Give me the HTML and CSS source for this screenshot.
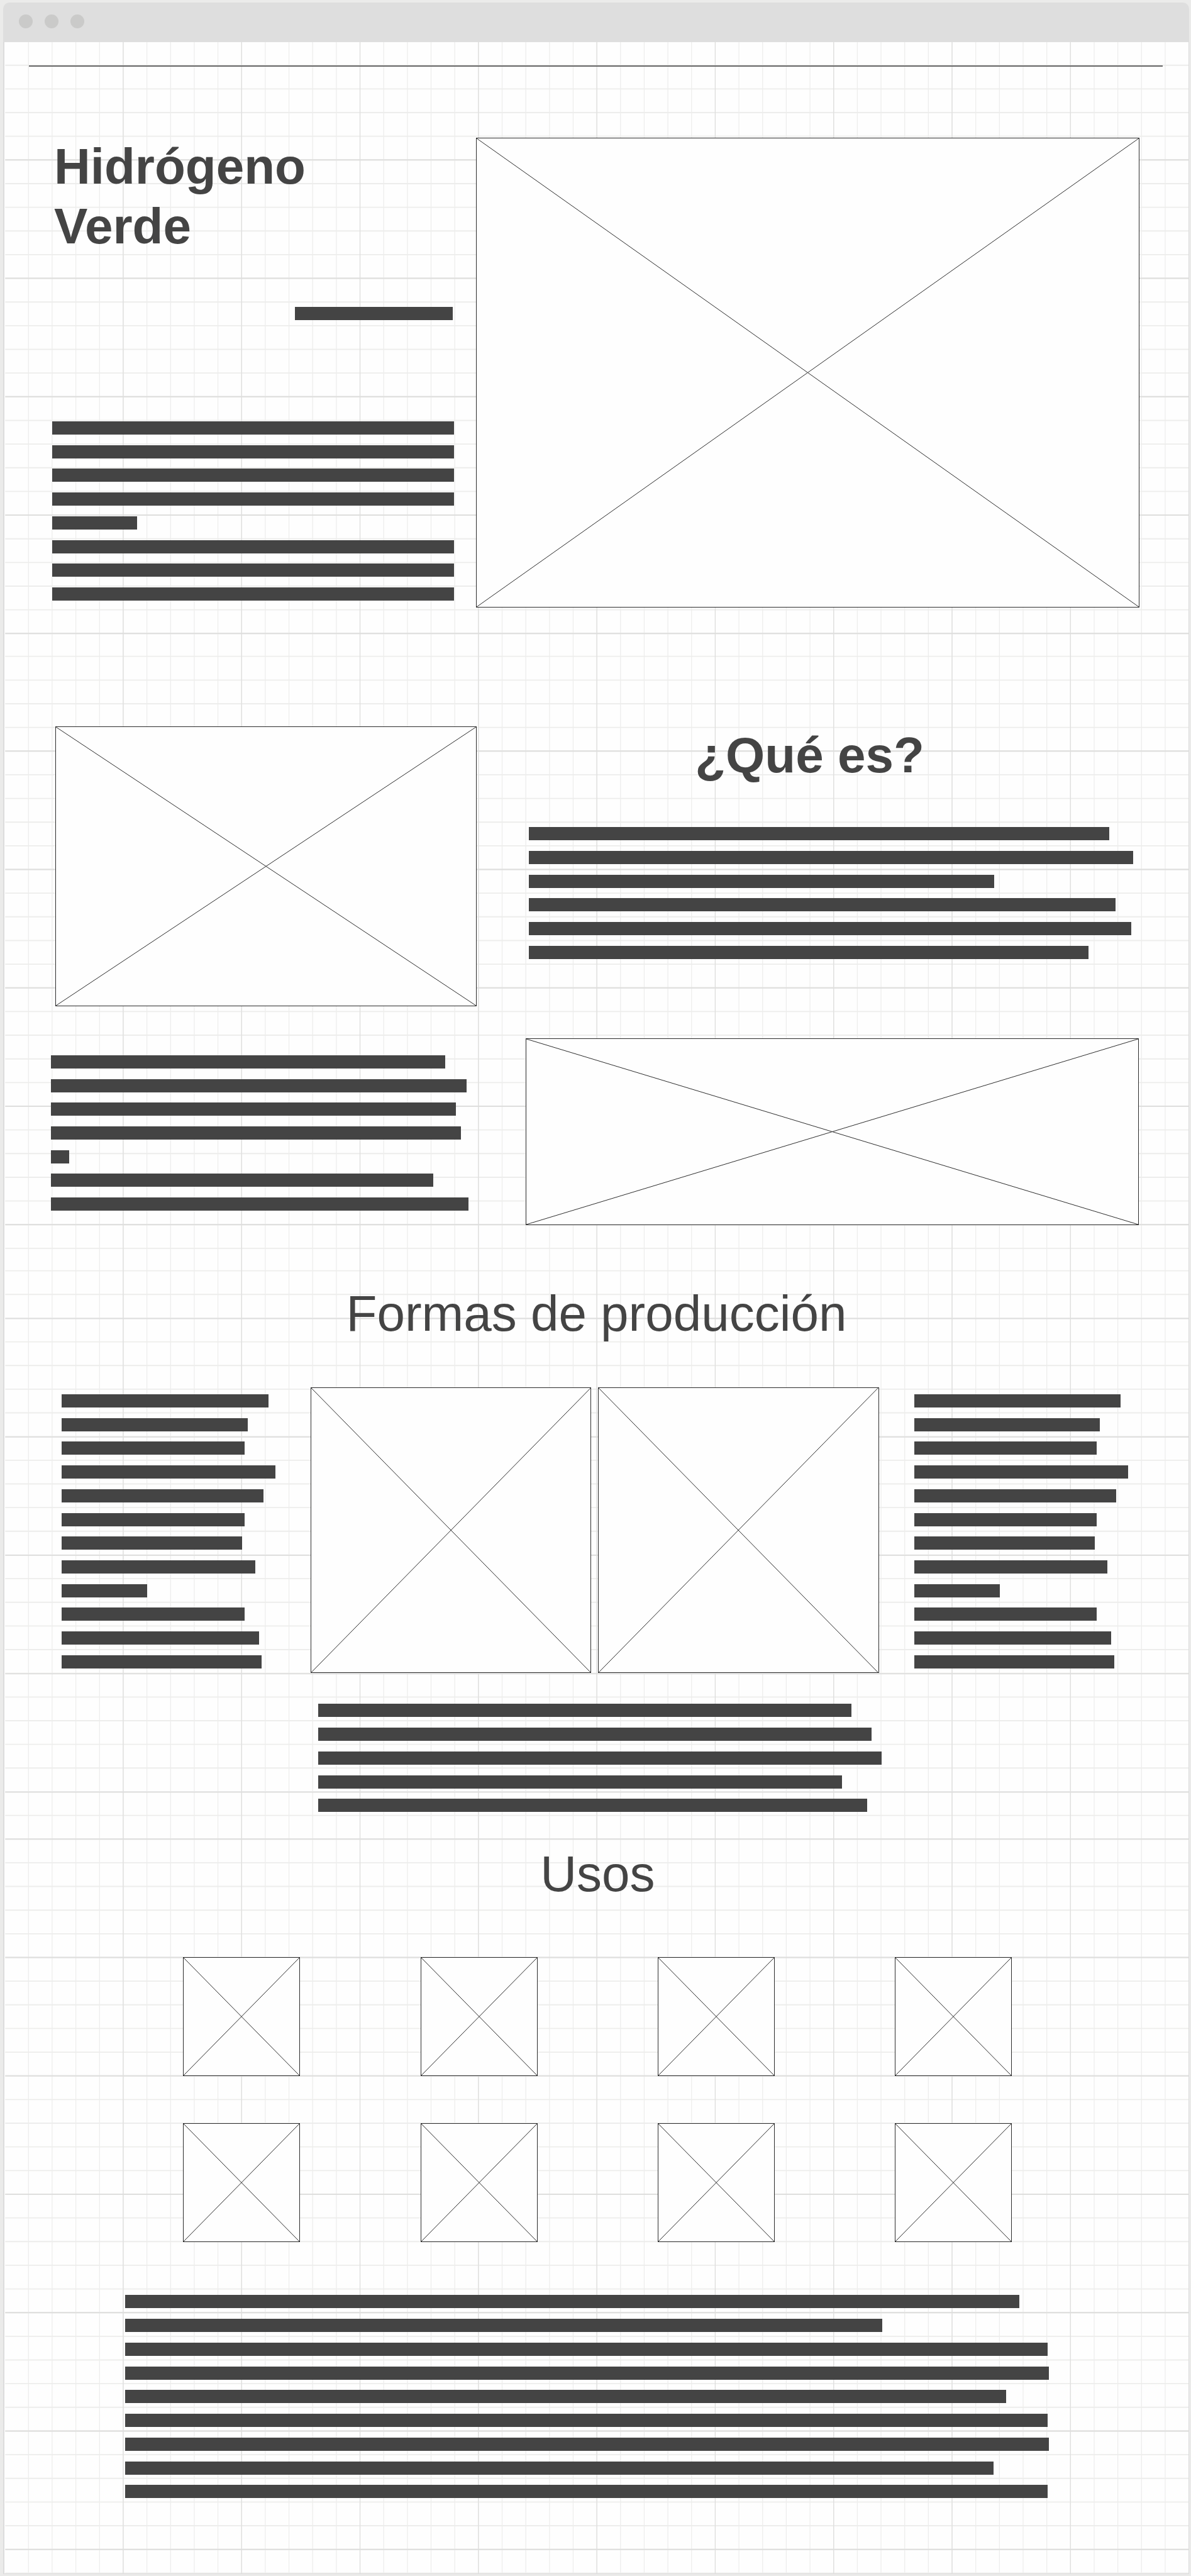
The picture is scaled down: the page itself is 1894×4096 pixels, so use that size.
FILE: index.html
```html
<!DOCTYPE html>
<html lang="es">
<head>
<meta charset="utf-8">
<title>Hidrógeno Verde</title>
<meta name="viewport" content="width=device-width, initial-scale=1">
<link rel="stylesheet" href="styles.css">
</head>
<body>
<div class="window">
  <div class="titlebar"><span class="dot"></span><span class="dot"></span><span class="dot"></span></div>
  <main class="sheet">
    <!-- Graph paper: each wide dashed stroke draws one family of parallel lines -->
    <svg class="paper" viewBox="11 106 3000 6415" preserveAspectRatio="none" aria-hidden="true">
      <g class="minor">
        <path d="M71 3313H3011" stroke-width="6415" stroke-dasharray="2 58"/>
        <g stroke-width="2998" stroke-dasharray="3 57">
          <path d="M1512 163V1607"/>
          <path d="M1512 1661V3165"/>
          <path d="M1512 3218V4603"/>
          <path d="M1512 4658V6521"/>
        </g>
      </g>
      <g class="major">
        <path d="M311 3313H3000" stroke-width="6415" stroke-dasharray="2 298"/>
        <g stroke-width="2998" stroke-dasharray="3 297">
          <path d="M1512 403V1607"/>
          <path d="M1512 1901V3105"/>
          <path d="M1512 3339V4543"/>
          <path d="M1512 4658V6521"/>
        </g>
      </g>
    </svg>

    <hr class="rule">

    <section class="hero">
      <div class="hero-text">
        <h1 class="heading">Hidrógeno<br>Verde</h1>
        <div class="lines byline"><i style="width:39.4%"></i></div>
        <div class="lines lines-8">
          <i style="width:100%"></i><i style="width:100%"></i><i style="width:100%"></i><i style="width:100%"></i><i style="width:21.2%"></i><i style="width:100%"></i><i style="width:100%"></i><i style="width:100%"></i>
        </div>
      </div>
      <svg class="picture hero-picture" viewBox="0 0 100 100" preserveAspectRatio="none"><path d="M0 0L100 100M100 0L0 100"/></svg>
    </section>

    <section class="about">
      <div class="about-side">
        <svg class="picture about-picture" viewBox="0 0 100 100" preserveAspectRatio="none"><path d="M0 0L100 100M100 0L0 100"/></svg>
        <div class="lines lines-7">
          <i style="width:94.5%"></i><i style="width:99.5%"></i><i style="width:97%"></i><i style="width:98.2%"></i><i style="width:4.4%"></i><i style="width:91.6%"></i><i style="width:100%"></i>
        </div>
      </div>
      <div class="about-main">
        <h2 class="heading">¿Qué es?</h2>
        <div class="lines lines-6">
          <i style="width:96%"></i><i style="width:100%"></i><i style="width:77%"></i><i style="width:97.1%"></i><i style="width:99.7%"></i><i style="width:92.6%"></i>
        </div>
        <svg class="picture banner-picture" viewBox="0 0 100 100" preserveAspectRatio="none"><path d="M0 0L100 100M100 0L0 100"/></svg>
      </div>
    </section>

    <section class="production">
      <h2 class="heading heading-light">Formas de producción</h2>
      <div class="production-row">
        <div class="lines lines-12">
          <i style="width:96.6%"></i><i style="width:86.9%"></i><i style="width:85.4%"></i><i style="width:100%"></i><i style="width:94.3%"></i><i style="width:85.4%"></i><i style="width:84.5%"></i><i style="width:90.4%"></i><i style="width:40%"></i><i style="width:85.4%"></i><i style="width:92.2%"></i><i style="width:93.4%"></i>
        </div>
        <div class="pair">
          <svg class="picture pair-picture" viewBox="0 0 100 100" preserveAspectRatio="none"><path d="M0 0L100 100M100 0L0 100"/></svg>
          <svg class="picture pair-picture" viewBox="0 0 100 100" preserveAspectRatio="none"><path d="M0 0L100 100M100 0L0 100"/></svg>
        </div>
        <div class="lines lines-12">
          <i style="width:96.6%"></i><i style="width:86.9%"></i><i style="width:85.4%"></i><i style="width:100%"></i><i style="width:94.3%"></i><i style="width:85.4%"></i><i style="width:84.5%"></i><i style="width:90.4%"></i><i style="width:40%"></i><i style="width:85.4%"></i><i style="width:92.2%"></i><i style="width:93.4%"></i>
        </div>
      </div>
      <div class="lines lines-5">
        <i style="width:94.6%"></i><i style="width:98.2%"></i><i style="width:100%"></i><i style="width:92.9%"></i><i style="width:97.4%"></i>
      </div>
    </section>

    <section class="uses">
      <h2 class="heading heading-light">Usos</h2>
      <div class="tiles">
        <svg class="picture tile" viewBox="0 0 100 100" preserveAspectRatio="none"><path d="M0 0L100 100M100 0L0 100"/></svg>
        <svg class="picture tile" viewBox="0 0 100 100" preserveAspectRatio="none"><path d="M0 0L100 100M100 0L0 100"/></svg>
        <svg class="picture tile" viewBox="0 0 100 100" preserveAspectRatio="none"><path d="M0 0L100 100M100 0L0 100"/></svg>
        <svg class="picture tile" viewBox="0 0 100 100" preserveAspectRatio="none"><path d="M0 0L100 100M100 0L0 100"/></svg>
        <svg class="picture tile" viewBox="0 0 100 100" preserveAspectRatio="none"><path d="M0 0L100 100M100 0L0 100"/></svg>
        <svg class="picture tile" viewBox="0 0 100 100" preserveAspectRatio="none"><path d="M0 0L100 100M100 0L0 100"/></svg>
        <svg class="picture tile" viewBox="0 0 100 100" preserveAspectRatio="none"><path d="M0 0L100 100M100 0L0 100"/></svg>
        <svg class="picture tile" viewBox="0 0 100 100" preserveAspectRatio="none"><path d="M0 0L100 100M100 0L0 100"/></svg>
      </div>
    </section>

    <section class="closing">
      <div class="lines lines-9">
        <i style="width:96.8%"></i><i style="width:82%"></i><i style="width:99.9%"></i><i style="width:100%"></i><i style="width:95.4%"></i><i style="width:99.9%"></i><i style="width:100%"></i><i style="width:94%"></i><i style="width:99.9%"></i>
      </div>
    </section>
  </main>
</div>
</body>
</html>
```
FILE: styles.css
```css
:root {
  --ink: #444;
  --outline: #2c2c2c;
  --frame: #dcdcdc;
}

* { box-sizing: border-box; }

body {
  margin: 0;
  background: #ebebea;
  color: var(--ink);
  font-family: "Liberation Sans", Arial, sans-serif;
}

/* Browser window */
.window { padding: 4px 3px 3px 5px; }

.titlebar {
  display: flex;
  align-items: center;
  gap: 19px;
  height: 63px;
  padding: 0 25px 3px;
  background: #dedede;
  border-radius: 10px 10px 0 0;
}

.dot {
  width: 22px;
  height: 22px;
  border-radius: 50%;
  background: #cacac9;
}

.sheet {
  position: relative;
  z-index: 0;
  padding: 37px 0 120px;
  background: #fefefe;
  border: solid var(--frame);
  border-width: 0 1px 1px 2px;
}

.paper {
  position: absolute;
  inset: 0;
  z-index: -1;
  width: 100%;
  height: 100%;
}

.paper path { fill: none; }
.minor { stroke: #ededec; }
.major { stroke: #dededd; }

.rule {
  height: 2px;
  margin: 0 41px 0 39px;
  border: 0;
  background: #666;
}

/* Shared pieces */
.heading {
  margin: -2px 0 0;
  font-size: 80px;
  line-height: 95px;
  font-weight: 700;
}

.heading-light {
  font-weight: 400;
  text-align: center;
}

.lines {
  display: flex;
  flex-direction: column;
  justify-content: space-between;
}

.lines i {
  display: block;
  height: 21px;
  background: var(--ink);
}

.lines-5 { height: 172px; }
.lines-6 { height: 210px; }
.lines-7 { height: 247px; }
.lines-8 { height: 285px; }
.lines-9 { height: 323px; }
.lines-12 { height: 436px; }

.picture {
  display: block;
  width: 100%;
  background: #fefefe;
  border: 1px solid var(--outline);
}

.picture path {
  fill: none;
  stroke: var(--outline);
  stroke-width: 1px;
  vector-effect: non-scaling-stroke;
}

/* Hero */
.hero {
  display: grid;
  grid-template-columns: 639fr 1055fr;
  gap: 35px;
  margin-top: 113px;
  padding: 0 78px 0 76px;
}

.hero-text .heading { padding-left: 3px; }

.byline {
  align-items: flex-end;
  margin: 81px 2px 161px 0;
}

.hero-picture { aspect-ratio: 1055 / 747; }

/* What it is */
.about {
  display: grid;
  grid-template-columns: 678fr 975fr;
  gap: 78px;
  margin-top: 189px;
  padding: 0 79px 0 73px;
}

.about-side { padding-left: 8px; }
.about-picture { aspect-ratio: 670 / 445; }

.about-side .lines {
  margin: 78px 13px 0 -7px;
}

.about-main .heading {
  padding-right: 72px;
  text-align: center;
}

.about-main .lines { margin: 67px 9px 126px 5px; }
.banner-picture { aspect-ratio: 975 / 297; }

/* Production */
.production { margin-top: 95px; }

.production-row {
  display: grid;
  grid-template-columns: 340fr 903fr 340fr;
  gap: 56px;
  margin-top: 70px;
  padding: 0 96px 0 91px;
}

.production-row .lines { margin-top: 11px; }

.pair {
  display: grid;
  grid-template-columns: 1fr 1fr;
  gap: 11px;
}

.pair-picture { aspect-ratio: 446 / 454; }

.lines-5 {
  width: 47.6%;
  margin: 49px 0 0 26.5%;
}

/* Uses */
.uses {
  margin-top: 53px;
  padding: 0 14.9% 0 15.1%;
}

.tiles {
  display: grid;
  grid-template-columns: repeat(4, 186px);
  justify-content: space-between;
  row-gap: 75px;
  margin-top: 85px;
}

.tile { aspect-ratio: 186 / 189; }

/* Closing text */
.closing {
  width: 78%;
  margin: 84px 0 0 10.2%;
}
```
